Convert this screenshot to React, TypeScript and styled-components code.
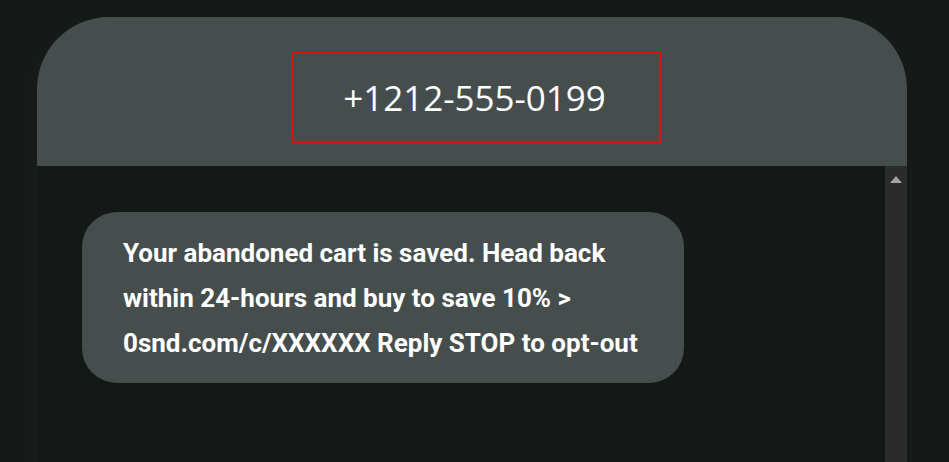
import React, { ReactElement } from 'react';
import styled, { createGlobalStyle } from 'styled-components';

const GlobalStyle = createGlobalStyle`
  html, body {
    margin: 0;
    padding: 0;
    background: #151918;
    overflow: hidden;
  }
  * { box-sizing: border-box; }
`;

export default function App(): ReactElement {
  const message =
    'Your abandoned cart is saved. Head back within 24-hours and buy to save 10% > 0snd.com/c/XXXXXX Reply STOP to opt-out';

  return (
    <>
      <GlobalStyle />
      <PageBlock>
        <Phone>
          <PhoneHeader>
            <NumberBox>+1212-555-0199</NumberBox>
          </PhoneHeader>
          <PhoneBody>
            <MessageList>
              <Bubble>{message}</Bubble>
            </MessageList>
            <ScrollTrack>
              <ScrollArrow />
            </ScrollTrack>
          </PhoneBody>
        </Phone>
      </PageBlock>
    </>
  );
}

const PageBlock = styled.div`
  width: 949px;
  height: 462px;
  padding: 17px 0 0 37px;
  background: #151918;
`;

const Phone = styled.div`
  width: 870px;
  height: 445px;
  display: flex;
  flex-direction: column;
  border-radius: 72px 72px 0 0;
  overflow: hidden;
  box-shadow: -10px 10px 18px rgba(255, 255, 255, 0.015);
`;

const PhoneHeader = styled.div`
  height: 149px;
  flex-shrink: 0;
  background: #464e4d;
  display: flex;
  justify-content: center;
  align-items: flex-start;
  padding: 35px 0 0 9px;
`;

const NumberBox = styled.div`
  width: 369px;
  height: 91px;
  border: 2px solid #e01010;
  display: flex;
  align-items: center;
  justify-content: center;
  padding-right: 4px;
  color: #ffffff;
  font-family: 'Open Sans', 'Liberation Sans', sans-serif;
  font-size: 35px;
`;

const PhoneBody = styled.div`
  flex: 1;
  display: grid;
  grid-template-columns: 1fr 22px;
  background: #141817;
`;

const MessageList = styled.div`
  padding: 46px 0 0 45px;
`;

const Bubble = styled.div`
  width: 602px;
  padding: 19px 40px 17px 41px;
  border-radius: 35px;
  background: #464e4d;
  color: #ffffff;
  font-family: Roboto, 'Liberation Sans', sans-serif;
  font-weight: 700;
  font-size: 26px;
  line-height: 45px;
`;

const ScrollTrack = styled.div`
  background: #2b2b2b;
  display: flex;
  justify-content: center;
  padding-top: 10px;
`;

const ScrollArrow = styled.div`
  width: 0;
  height: 0;
  border-left: 6px solid transparent;
  border-right: 6px solid transparent;
  border-bottom: 7px solid #a3a3a3;
`;
